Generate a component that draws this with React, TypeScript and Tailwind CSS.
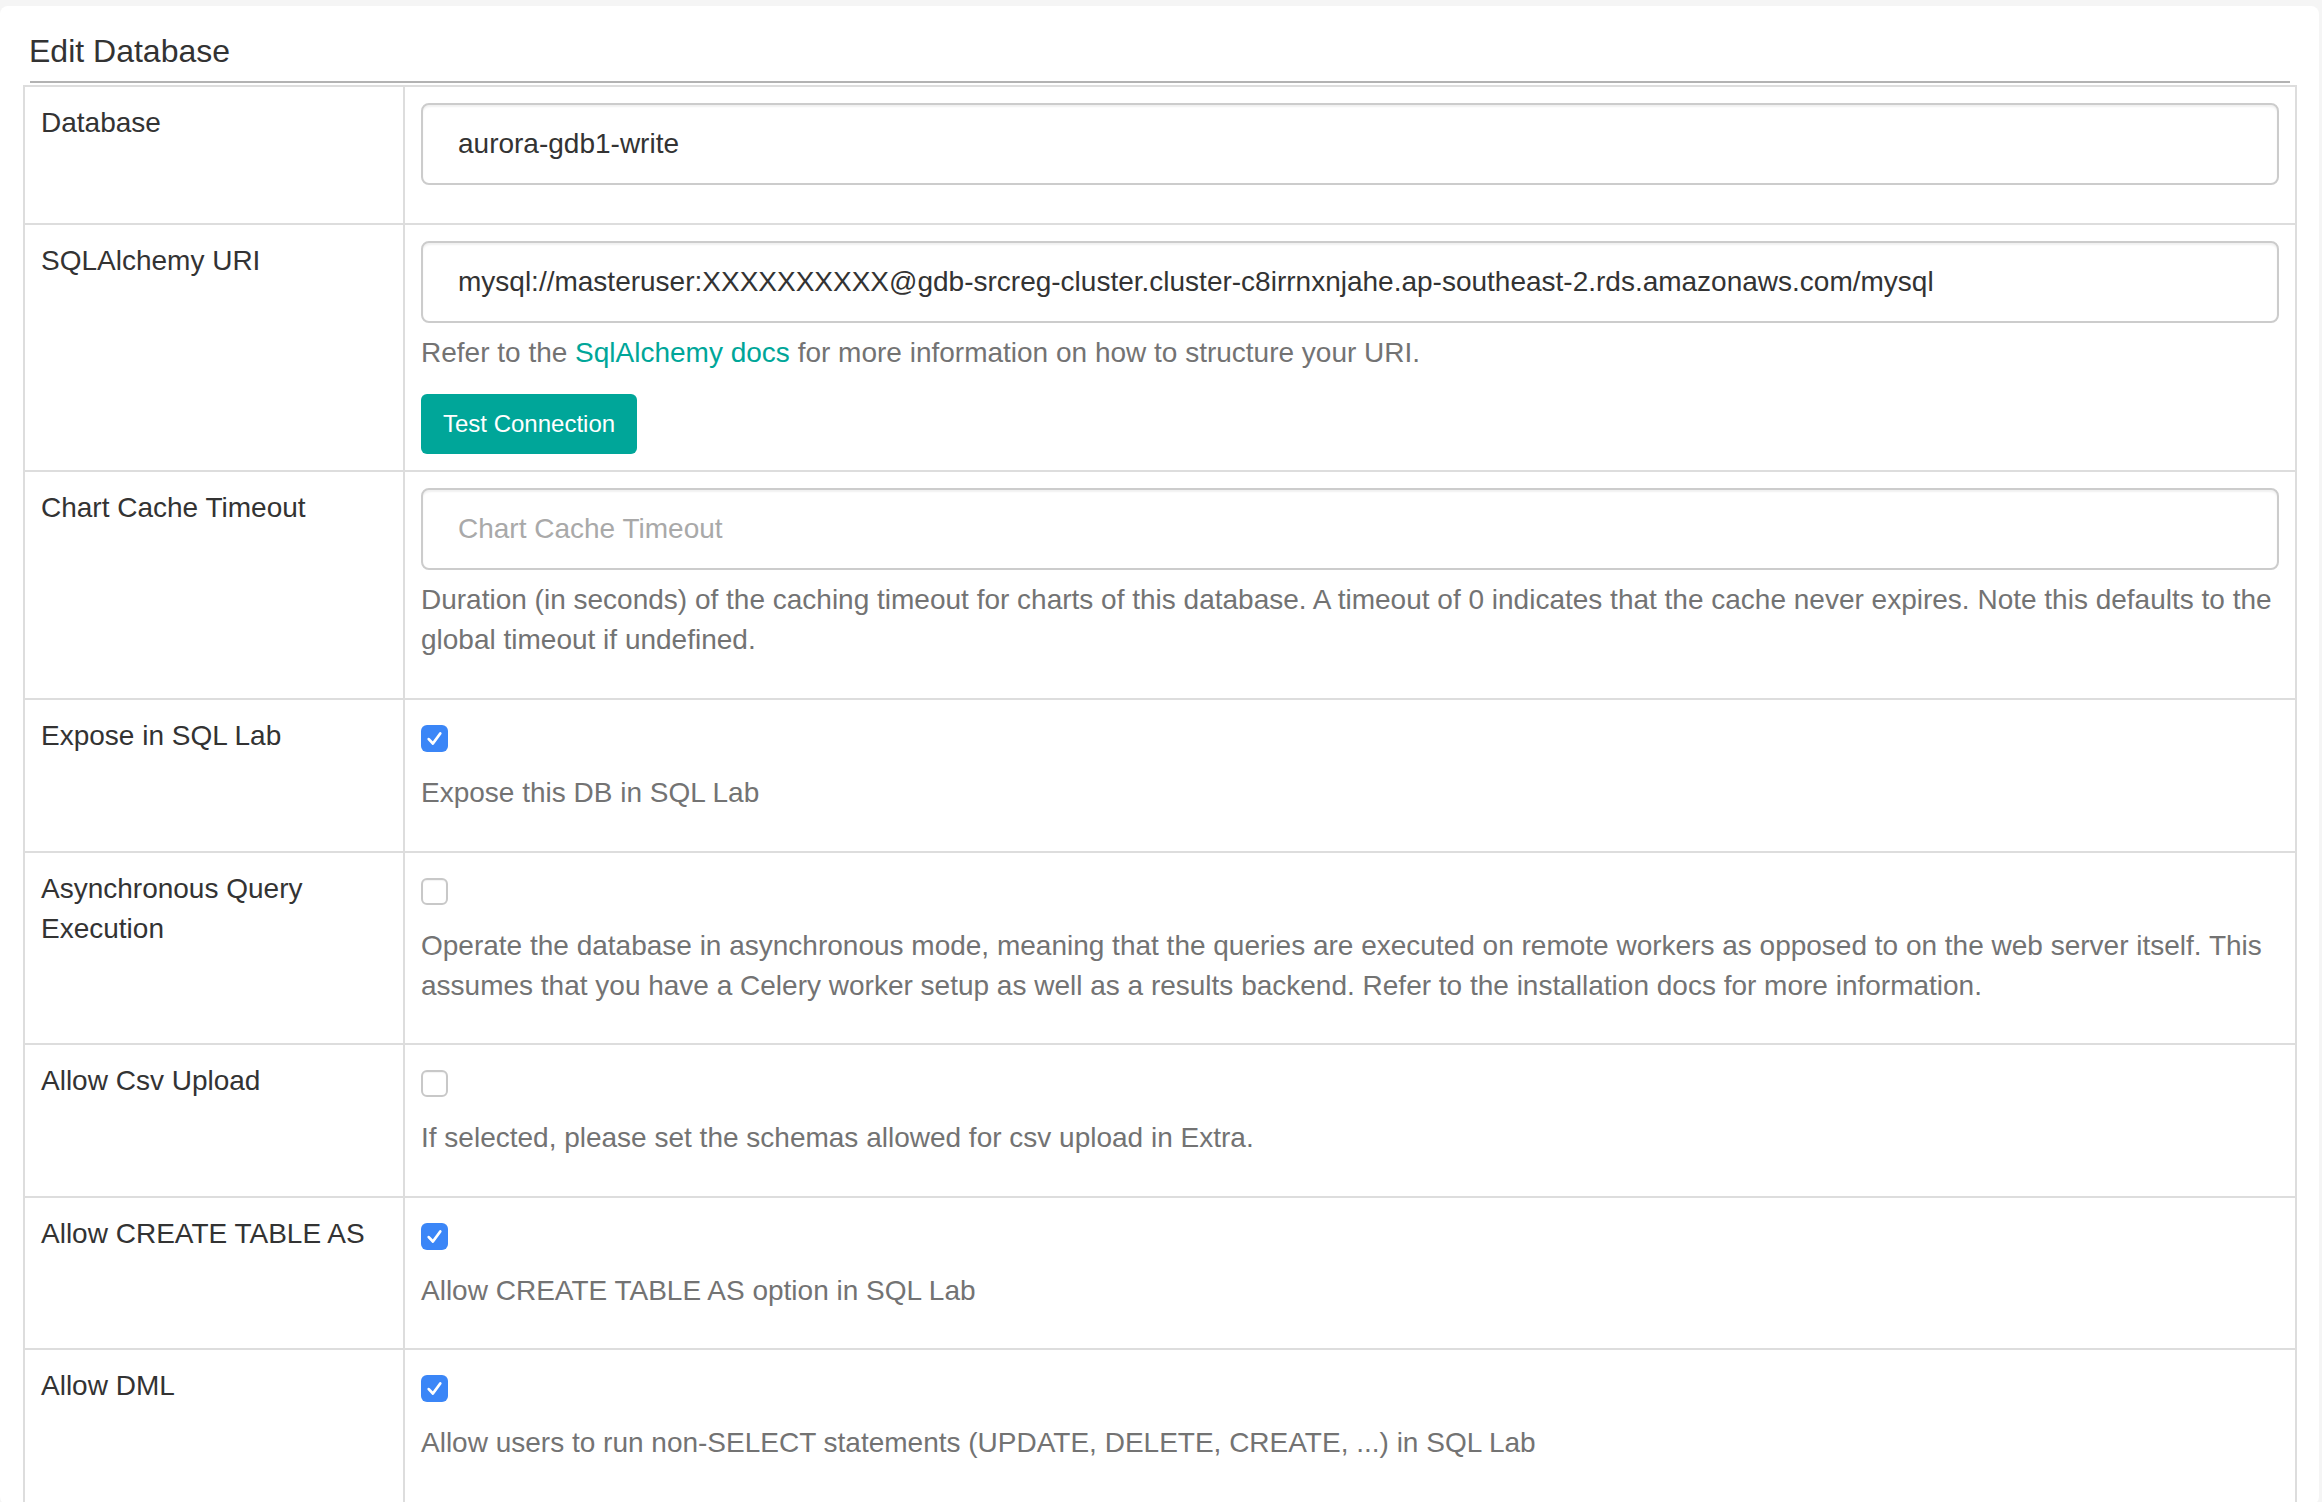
import type { ReactNode } from "react";

const font = { fontFamily: '"Liberation Sans", Arial, Helvetica, sans-serif' };

function Check({ checked }: { checked: boolean }) {
  return checked ? (
    <span className="mt-[9px] flex h-[27px] w-[27px] items-center justify-center rounded-[6px] bg-[#3b86f7]">
      <svg viewBox="0 0 16 16" className="h-[23px] w-[23px]" fill="none">
        <path d="M4 8.4l2.9 3.1 5.1-7" stroke="#fff" strokeWidth="1.9" strokeLinecap="round" strokeLinejoin="round" />
      </svg>
    </span>
  ) : (
    <span className="mt-[9px] block h-[27px] w-[27px] rounded-[6px] border-2 border-[#c8c8c8] bg-white shadow-[inset_0_1px_1px_rgba(0,0,0,0.05)]" />
  );
}

function Help({ lines, className = "mt-[10px] mb-[22px]" }: { lines: ReactNode[]; className?: string }) {
  return (
    <div className={`text-[28px] leading-[40px] text-[#737373] ${className}`}>
      {lines.map((line, i) => (
        <div key={i} className="whitespace-nowrap">
          {line}
        </div>
      ))}
    </div>
  );
}

function TextInput({ value, placeholder }: { value?: string; placeholder?: string }) {
  return (
    <div className="flex h-[82px] items-center rounded-[8px] border-2 border-[#cccccc] pl-[35px] shadow-[inset_0_2px_2px_rgba(0,0,0,0.06)]">
      {value ? (
        <span className="whitespace-nowrap text-[28px] text-[#333]">{value}</span>
      ) : (
        <span className="whitespace-nowrap text-[28px] text-[#a9a9a9]">{placeholder}</span>
      )}
    </div>
  );
}

function Row({ label, children }: { label: ReactNode; children: ReactNode }) {
  return (
    <div className="flex border-t-2 border-[#dddddd]">
      <div className="w-[378px] shrink-0 p-4 text-[28px] leading-[40px] text-[#333]">{label}</div>
      <div className="min-w-0 flex-1 border-l-2 border-[#dddddd] px-4 pt-4 pb-4">{children}</div>
    </div>
  );
}

// checkbox rows: box, then the help text
const checkHelp = "mt-[21px] mb-[21px]";

export default function App() {
  return (
    <div className="min-h-screen bg-[#f5f5f5] pt-[6px] pr-[3px]" style={font}>
      <div className="rounded-[8px] bg-white pt-[27px]">
        <h3 className="pl-[29px] text-[32px] font-normal leading-[36px] text-[#333]">Edit Database</h3>
        <div className="mt-[12px] ml-[30px] mr-[29px] h-[2px] bg-[#b3b3b3]" />

        <div className="mt-[2px] ml-[23px] mr-[22px] border-x-2 border-b-2 border-[#dddddd]">
          <Row label="Database">
            <div className="mb-[22px]">
              <TextInput value="aurora-gdb1-write" />
            </div>
          </Row>

          <Row label="SQLAlchemy URI">
            <TextInput value="mysql://masteruser:XXXXXXXXXX@gdb-srcreg-cluster.cluster-c8irrnxnjahe.ap-southeast-2.rds.amazonaws.com/mysql" />
            <Help
              className="mt-[10px] mb-[21px]"
              lines={[
                <>
                  Refer to the <a className="text-[#00a699]">SqlAlchemy docs</a> for more information on how to structure your URI.
                </>,
              ]}
            />
            <button className="h-[60px] rounded-[6px] bg-[#00a699] px-[22px] text-[24px] text-white">Test Connection</button>
          </Row>

          <Row label="Chart Cache Timeout">
            <TextInput placeholder="Chart Cache Timeout" />
            <Help
              lines={[
                "Duration (in seconds) of the caching timeout for charts of this database. A timeout of 0 indicates that the cache never expires. Note this defaults to the",
                "global timeout if undefined.",
              ]}
            />
          </Row>

          <Row label="Expose in SQL Lab">
            <Check checked />
            <Help className="mt-[21px] mb-[22px]" lines={["Expose this DB in SQL Lab"]} />
          </Row>

          <Row
            label={
              <>
                Asynchronous Query
                <br />
                Execution
              </>
            }
          >
            <Check checked={false} />
            <Help
              className={checkHelp}
              lines={[
                "Operate the database in asynchronous mode, meaning that the queries are executed on remote workers as opposed to on the web server itself. This",
                "assumes that you have a Celery worker setup as well as a results backend. Refer to the installation docs for more information.",
              ]}
            />
          </Row>

          <Row label="Allow Csv Upload">
            <Check checked={false} />
            <Help className="mt-[21px] mb-[22px]" lines={["If selected, please set the schemas allowed for csv upload in Extra."]} />
          </Row>

          <Row label="Allow CREATE TABLE AS">
            <Check checked />
            <Help className={checkHelp} lines={["Allow CREATE TABLE AS option in SQL Lab"]} />
          </Row>

          <Row label="Allow DML">
            <Check checked />
            <Help
              className="mt-[21px] mb-[24px]"
              lines={["Allow users to run non-SELECT statements (UPDATE, DELETE, CREATE, ...) in SQL Lab"]}
            />
          </Row>
        </div>
      </div>
    </div>
  );
}
